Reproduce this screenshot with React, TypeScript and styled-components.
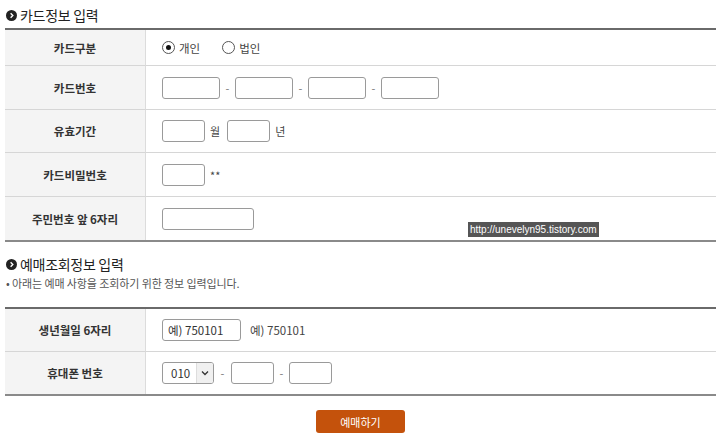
import React from 'react'
import styled, { createGlobalStyle } from 'styled-components'

const GlobalStyle = createGlobalStyle`
  html, body {
    margin: 0;
    padding: 0;
    background: #fff;
  }
  body {
    font-family: "Noto Sans CJK KR", "Noto Sans", sans-serif;
    color: #333;
  }
`

const Page = styled.div`
  position: relative;
  width: 720px;
  height: 448px;
  padding: 0 4px 0 5px;
  box-sizing: border-box;
  overflow: hidden;
`

const Title = styled.h2<{ $top: number }>`
  display: flex;
  align-items: center;
  gap: 3px;
  margin: ${(p) => p.$top}px 0 0 1px;
  height: 20px;
  font-size: 14px;
  font-weight: 400;
  color: #222;
  letter-spacing: -0.3px;
`

const Bullet = styled.span`
  display: inline-flex;
  align-items: center;
  justify-content: center;
  width: 11px;
  height: 11px;
  border-radius: 50%;
  background: #222;
`

const Note = styled.p`
  margin: 1px 0 0 1px;
  font-size: 11px;
  color: #555;
  letter-spacing: -0.1px;
`

const Table = styled.div<{ $top: number }>`
  margin-top: ${(p) => p.$top}px;
  border-top: 2px solid #6a6a6a;
  border-bottom: 2px solid #8a8a8a;
  display: grid;
  grid-template-columns: 141px 1fr;
`

const Label = styled.div<{ $h: number; $last?: boolean }>`
  height: ${(p) => p.$h}px;
  box-sizing: border-box;
  background: #f4f4f4;
  border-right: 1px solid #dcdcdc;
  border-bottom: ${(p) => (p.$last ? 'none' : '1px solid #d6d6d6')};
  display: flex;
  align-items: center;
  justify-content: center;
  font-size: 11.5px;
  font-weight: 700;
  color: #333;
`

const Cell = styled.div<{ $h: number; $last?: boolean }>`
  height: ${(p) => p.$h}px;
  box-sizing: border-box;
  border-bottom: ${(p) => (p.$last ? 'none' : '1px solid #d6d6d6')};
  display: flex;
  align-items: center;
  padding-left: 16px;
  font-size: 11.5px;
  color: #444;
`

const Input = styled.div<{ $w: number }>`
  width: ${(p) => p.$w}px;
  height: 22px;
  box-sizing: border-box;
  border: 1px solid #9a9a9a;
  border-radius: 3px;
  background: #fff;
  display: flex;
  align-items: center;
  padding-left: 5px;
  font-size: 11.5px;
  color: #333;
`

const Dash = styled.span<{ $w?: number }>`
  width: ${(p) => p.$w ?? 15}px;
  text-align: center;
  color: #777;
  font-size: 11px;
`

const Unit = styled.span<{ $gap?: number }>`
  margin: 0 ${(p) => p.$gap ?? 6}px 0 5px;
  font-size: 11px;
  color: #444;
`

const RadioGroup = styled.label`
  display: flex;
  align-items: center;
  gap: 4px;
  margin-right: 22px;
`

const RadioCircle = styled.span<{ $on?: boolean }>`
  width: 11px;
  height: 11px;
  border-radius: 50%;
  border: 1px solid #555;
  display: inline-flex;
  align-items: center;
  justify-content: center;
  &::after {
    content: '';
    width: 5px;
    height: 5px;
    border-radius: 50%;
    background: ${(p) => (p.$on ? '#111' : 'transparent')};
  }
`

const Select = styled.div`
  width: 52px;
  height: 22px;
  box-sizing: border-box;
  border: 1px solid #9a9a9a;
  border-radius: 3px;
  display: flex;
  align-items: center;
  font-size: 11.5px;
  color: #333;
`

const SelectValue = styled.span`
  flex: 1;
  padding-left: 8px;
`

const SelectArrow = styled.span`
  width: 16px;
  height: 100%;
  display: flex;
  align-items: center;
  justify-content: center;
  background: #f0f0f0;
  border-left: 1px solid #ddd;
  border-radius: 0 2px 2px 0;
`

const Hint = styled.span`
  margin-left: 9px;
  font-size: 11.5px;
  color: #444;
`

const Actions = styled.div`
  display: flex;
  justify-content: center;
  margin-top: 14px;
`

const Button = styled.button`
  width: 89px;
  height: 23px;
  border: none;
  border-radius: 3px;
  background: #c4520c;
  color: #fff;
  font-family: "Noto Sans CJK KR", sans-serif;
  font-size: 11px;
  padding: 0;
`

const Watermark = styled.div`
  position: absolute;
  left: 468px;
  top: 222px;
  height: 15px;
  padding: 0 2px;
  background: #555;
  color: #fff;
  font-family: "Liberation Sans", sans-serif;
  font-size: 10px;
  line-height: 15px;
`

const Chevron = () => (
  <svg width="7" height="7" viewBox="0 0 8 8">
    <path d="M3 1.5 L5.5 4 L3 6.5" stroke="#fff" strokeWidth="1.6" fill="none" />
  </svg>
)

const Down = () => (
  <svg width="8" height="6" viewBox="0 0 8 6">
    <path d="M1 1.5 L4 4.5 L7 1.5" stroke="#333" strokeWidth="1.3" fill="none" />
  </svg>
)

const App: React.FC = () => {
  return (
    <Page>
      <GlobalStyle />
      <Title $top={5}>
        <Bullet>
          <Chevron />
        </Bullet>
        카드정보 입력
      </Title>
      <Table $top={3}>
        <Label $h={36}>카드구분</Label>
        <Cell $h={36}>
          <RadioGroup>
            <RadioCircle $on />
            개인
          </RadioGroup>
          <RadioGroup>
            <RadioCircle />
            법인
          </RadioGroup>
        </Cell>
        <Label $h={44}>카드번호</Label>
        <Cell $h={44}>
          <Input $w={58} />
          <Dash>-</Dash>
          <Input $w={58} />
          <Dash>-</Dash>
          <Input $w={58} />
          <Dash>-</Dash>
          <Input $w={58} />
        </Cell>
        <Label $h={43}>유효기간</Label>
        <Cell $h={43}>
          <Input $w={43} />
          <Unit $gap={7}>월</Unit>
          <Input $w={43} />
          <Unit>년</Unit>
        </Cell>
        <Label $h={44}>카드비밀번호</Label>
        <Cell $h={44}>
          <Input $w={43} />
          <Unit>**</Unit>
        </Cell>
        <Label $h={43} $last>
          주민번호 앞 6자리
        </Label>
        <Cell $h={43} $last>
          <Input $w={92} />
        </Cell>
      </Table>
      <Title $top={12}>
        <Bullet>
          <Chevron />
        </Bullet>
        예매조회정보 입력
      </Title>
      <Note>• 아래는 예매 사항을 조회하기 위한 정보 입력입니다.</Note>
      <Table $top={16}>
        <Label $h={43}>생년월일 6자리</Label>
        <Cell $h={43}>
          <Input $w={79}>예) 750101</Input>
          <Hint>예) 750101</Hint>
        </Cell>
        <Label $h={42} $last>
          휴대폰 번호
        </Label>
        <Cell $h={42} $last>
          <Select>
            <SelectValue>010</SelectValue>
            <SelectArrow>
              <Down />
            </SelectArrow>
          </Select>
          <Dash $w={17}>-</Dash>
          <Input $w={43} />
          <Dash>-</Dash>
          <Input $w={43} />
        </Cell>
      </Table>
      <Actions>
        <Button>예매하기</Button>
      </Actions>
      <Watermark>http://unevelyn95.tistory.com</Watermark>
    </Page>
  )
}

export default App
